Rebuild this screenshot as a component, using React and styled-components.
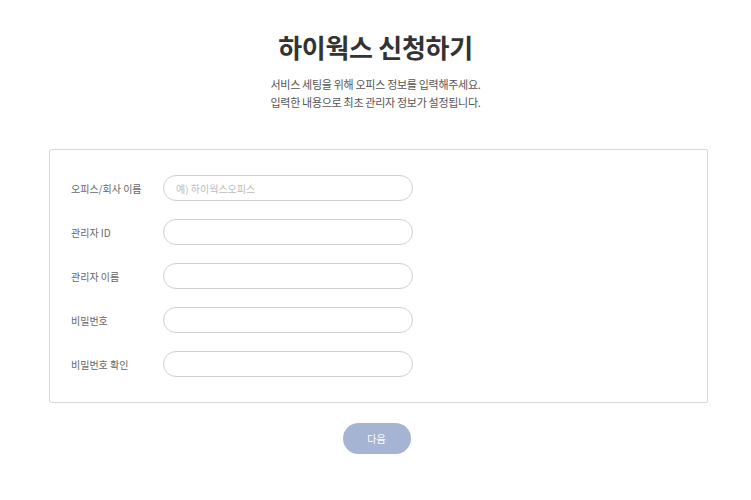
import React from 'react'
import styled, { createGlobalStyle } from 'styled-components'

const fields = [
  { label: '오피스/회사 이름', placeholder: '예) 하이웍스오피스', type: 'text' },
  { label: '관리자 ID', placeholder: '', type: 'text' },
  { label: '관리자 이름', placeholder: '', type: 'text' },
  { label: '비밀번호', placeholder: '', type: 'password' },
  { label: '비밀번호 확인', placeholder: '', type: 'password' },
]

const App = () => {
  return (
    <>
      <GlobalStyle />
      <Page>
        <Title>하이웍스 신청하기</Title>
        <Description>
          서비스 세팅을 위해 오피스 정보를 입력해주세요.
          <br />
          입력한 내용으로 최초 관리자 정보가 설정됩니다.
        </Description>
        <FormBox>
          {fields.map(field => (
            <Row key={field.label}>
              <Label>{field.label}</Label>
              <Input type={field.type} placeholder={field.placeholder} />
            </Row>
          ))}
        </FormBox>
        <NextButton>다음</NextButton>
      </Page>
    </>
  )
}

const GlobalStyle = createGlobalStyle`
  body {
    margin: 0;
    background: #ffffff;
    font-family: "Noto Sans CJK KR", "Noto Sans", sans-serif;
    color: #333333;
  }
`

const Page = styled.div`
  display: flex;
  flex-direction: column;
  align-items: center;
  padding-top: 28px;
`

const Title = styled.h1`
  margin: 0;
  font-size: 26px;
  font-weight: 700;
  line-height: 38px;
  color: #333333;
  letter-spacing: -0.3px;
`

const Description = styled.p`
  margin: 9px 0 0;
  font-size: 11px;
  line-height: 18px;
  color: #555555;
  text-align: center;
  letter-spacing: -0.3px;
`

const FormBox = styled.div`
  box-sizing: border-box;
  width: 659px;
  margin-top: 38px;
  margin-left: 6px;
  padding: 25px 21px 25px;
  border: 1px solid #d8d8d8;
  border-radius: 2px;
  display: flex;
  flex-direction: column;
  gap: 18px;
`

const Row = styled.div`
  display: flex;
  align-items: center;
`

const Label = styled.label`
  width: 92px;
  font-size: 10px;
  color: #666666;
`

const Input = styled.input`
  box-sizing: border-box;
  width: 250px;
  height: 26px;
  padding: 0 12px;
  border: 1px solid #cfcfcf;
  border-radius: 13px;
  font-family: inherit;
  font-size: 10px;
  color: #333333;
  outline: none;

  &::placeholder {
    color: #bbbbbb;
  }
`

const NextButton = styled.button`
  margin-top: 20px;
  margin-left: 2px;
  width: 68px;
  height: 31px;
  border: none;
  border-radius: 16px;
  background: #a5b4d2;
  color: #ffffff;
  font-family: inherit;
  font-size: 10px;
  cursor: pointer;
`

export default App
